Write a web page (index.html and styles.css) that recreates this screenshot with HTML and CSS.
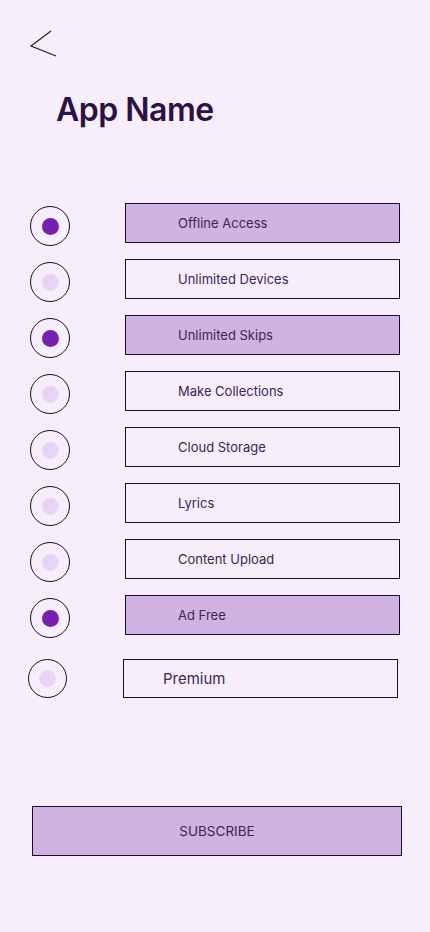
FILE: index.html
```html
<!DOCTYPE html>
<html lang="en">
<head>
  <meta charset="UTF-8" />
  <meta name="viewport" content="width=device-width, initial-scale=1.0"/>
  <title>App Name - Plans</title>
  <link rel="stylesheet" href="styles.css">
</head>
<body>
  <main class="screen">

    <!-- Retour -->
    <button class="back" aria-label="Back">
      <svg width="27" height="27" viewBox="0 0 27 27" fill="none">
        <polyline points="21,1 1,16 26,26" stroke="#2a1540" stroke-width="1.1" fill="none"/>
      </svg>
    </button>

    <h1 class="app-title">App Name</h1>

    <!-- Liste des fonctionnalités -->
    <ul class="features">
      <li class="feature is-on"><span class="radio"></span><span class="feature-box">Offline Access</span></li>
      <li class="feature"><span class="radio"></span><span class="feature-box">Unlimited Devices</span></li>
      <li class="feature is-on"><span class="radio"></span><span class="feature-box">Unlimited Skips</span></li>
      <li class="feature"><span class="radio"></span><span class="feature-box">Make Collections</span></li>
      <li class="feature"><span class="radio"></span><span class="feature-box">Cloud Storage</span></li>
      <li class="feature"><span class="radio"></span><span class="feature-box">Lyrics</span></li>
      <li class="feature"><span class="radio"></span><span class="feature-box">Content Upload</span></li>
      <li class="feature is-on"><span class="radio"></span><span class="feature-box">Ad Free</span></li>
    </ul>

    <!-- Offre premium -->
    <div class="plan">
      <span class="radio"></span>
      <span class="plan-box">Premium</span>
    </div>

    <button class="subscribe">SUBSCRIBE</button>
  </main>
</body>
</html>
```

FILE: styles.css
```css
:root {
  --bg: #f6eefa;
  --ink: #1e0a33;
  --text: #3d2554;
  --fill: #d0b2e3;
  --dot-on: #7520ad;
  --dot-off: #ead3f8;
}

body {
  margin: 0;
  background: var(--bg);
  font-family: 'Inter', 'Liberation Sans', sans-serif;
  color: var(--text);
}

.screen {
  width: 430px;
  min-height: 932px;
  padding-top: 30px;
  box-sizing: border-box;
}

.back {
  display: block;
  margin-left: 30px;
  padding: 0;
  border: none;
  background: none;
  width: 27px;
  height: 27px;
}

.back svg {
  display: block;
}

.app-title {
  margin: 33px 0 0 56px;
  font-size: 32px;
  line-height: 40px;
  font-weight: 600;
  letter-spacing: -0.5px;
  color: #2c1145;
}

.features {
  list-style: none;
  margin: 73px 0 0;
  padding: 0 30px;
  display: flex;
  flex-direction: column;
  gap: 16px;
}

.feature {
  display: flex;
  align-items: flex-start;
  height: 40px;
}

/* Bouton radio */
.radio {
  width: 40px;
  height: 40px;
  box-sizing: border-box;
  border: 1px solid var(--ink);
  border-radius: 50%;
  display: flex;
  align-items: center;
  justify-content: center;
  flex-shrink: 0;
}

.radio::after {
  content: "";
  width: 17px;
  height: 17px;
  border-radius: 50%;
  background: var(--dot-off);
}

.feature .radio {
  margin-top: 3px;
}

.feature.is-on .radio::after {
  background: var(--dot-on);
}

.feature-box {
  margin-left: 55px;
  width: 275px;
  height: 40px;
  box-sizing: border-box;
  border: 1px solid var(--ink);
  display: flex;
  align-items: center;
  padding-left: 52px;
  font-size: 13px;
}

.feature.is-on .feature-box {
  background: var(--fill);
}

.plan {
  display: flex;
  align-items: center;
  margin-top: 24px;
  padding-left: 28px;
}

.plan .radio {
  width: 39px;
  height: 39px;
}

.plan-box {
  margin-left: 56px;
  width: 275px;
  height: 39px;
  box-sizing: border-box;
  border: 1px solid var(--ink);
  display: flex;
  align-items: center;
  padding-left: 39px;
  font-size: 15px;
}

.subscribe {
  display: block;
  margin: 108px 0 0 32px;
  width: 370px;
  height: 50px;
  border: 1px solid var(--ink);
  background: var(--fill);
  font-family: inherit;
  font-size: 13.5px;
  color: var(--text);
}
```
